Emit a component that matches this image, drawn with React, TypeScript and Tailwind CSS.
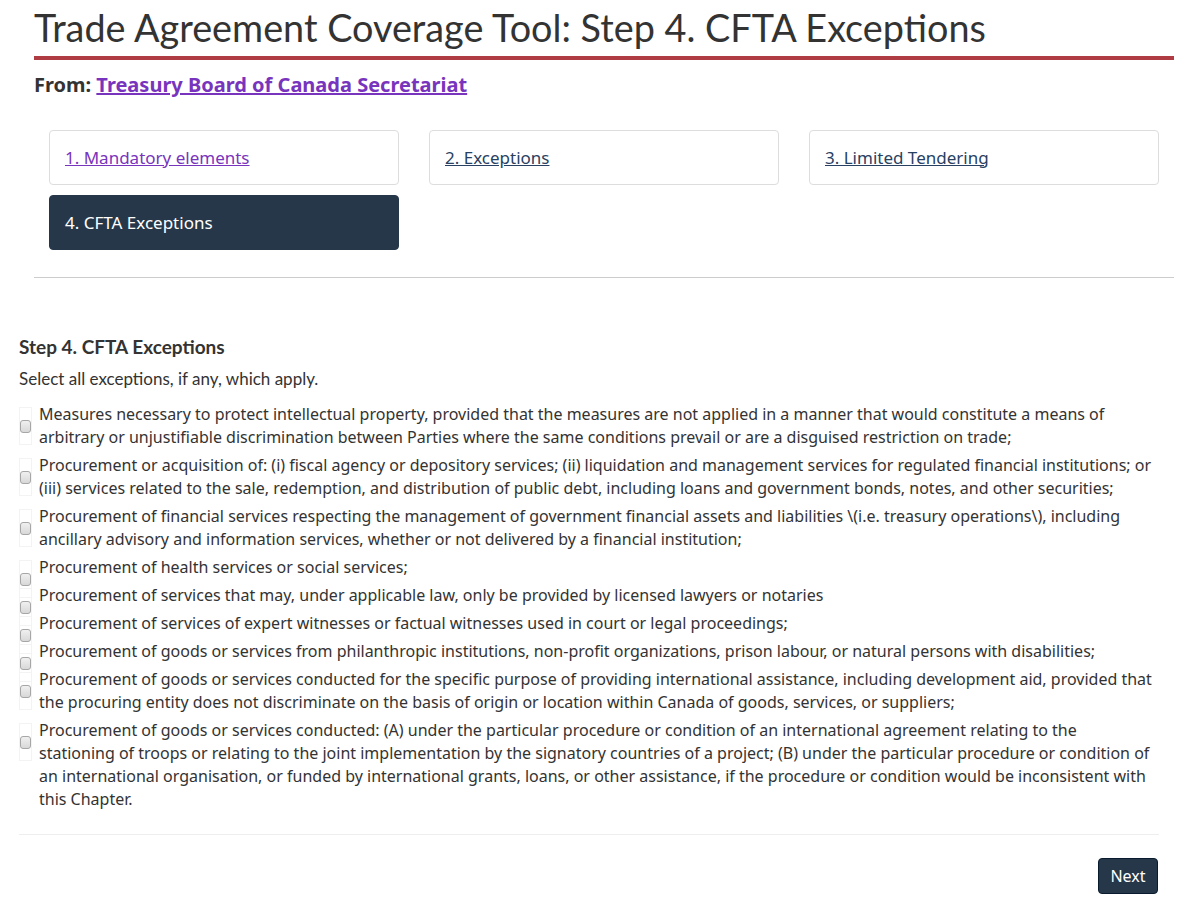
import React from "react";

const TABS = [
  { label: "1. Mandatory elements", color: "text-[#7834bc]" },
  { label: "2. Exceptions", color: "text-[#284162]" },
  { label: "3. Limited Tendering", color: "text-[#284162]" },
];

const EXCEPTIONS = [
  "Measures necessary to protect intellectual property, provided that the measures are not applied in a manner that would constitute a means of arbitrary or unjustifiable discrimination between Parties where the same conditions prevail or are a disguised restriction on trade;",
  "Procurement or acquisition of: (i) fiscal agency or depository services; (ii) liquidation and management services for regulated financial institutions; or (iii) services related to the sale, redemption, and distribution of public debt, including loans and government bonds, notes, and other securities;",
  "Procurement of financial services respecting the management of government financial assets and liabilities \\(i.e. treasury operations\\), including ancillary advisory and information services, whether or not delivered by a financial institution;",
  "Procurement of health services or social services;",
  "Procurement of services that may, under applicable law, only be provided by licensed lawyers or notaries",
  "Procurement of services of expert witnesses or factual witnesses used in court or legal proceedings;",
  "Procurement of goods or services from philanthropic institutions, non-profit organizations, prison labour, or natural persons with disabilities;",
  "Procurement of goods or services conducted for the specific purpose of providing international assistance, including development aid, provided that the procuring entity does not discriminate on the basis of origin or location within Canada of goods, services, or suppliers;",
  "Procurement of goods or services conducted: (A) under the particular procedure or condition of an international agreement relating to the stationing of troops or relating to the joint implementation by the signatory countries of a project; (B) under the particular procedure or condition of an international organisation, or funded by international grants, loans, or other assistance, if the procedure or condition would be inconsistent with this Chapter.",
];

const lato = "font-['Lato','Liberation_Sans',sans-serif]";
const noto = "font-['Noto_Sans','Liberation_Sans',sans-serif]";

export default function App() {
  return (
    <div className={`w-[1184px] bg-white text-[#333] ${noto}`}>
      {/* Header */}
      <div className="ml-[34px] w-[1140px] pt-[5px]">
        <h1 className={`${lato} text-[37.8px] leading-[46px] text-[#333] pb-[5px] border-b-4 border-[#af3c43]`}>
          Trade Agreement Coverage Tool: Step 4. CFTA Exceptions
        </h1>
        <p className="mt-[12px] text-[20px] leading-[26px] font-bold">
          From:{" "}
          <a href="#" className="text-[#7834bc] underline">
            Treasury Board of Canada Secretariat
          </a>
        </p>

        <div className="ml-[15px] mt-[32px] w-[1110px] grid grid-cols-3 gap-x-[30px] gap-y-[10px]">
          {TABS.map((t) => (
            <div key={t.label} className="h-[55px] flex items-center px-[15px] border border-[#ddd] rounded-[4px] bg-white">
              <a href="#" className={`${t.color} underline text-[17px]`}>
                {t.label}
              </a>
            </div>
          ))}
          <div className="h-[55px] flex items-center px-[15px] border border-[#26374a] rounded-[4px] bg-[#26374a]">
            <span className="text-white text-[17px]">4. CFTA Exceptions</span>
          </div>
        </div>

        <hr className="mt-[27px] border-t border-[#ccc]" />
      </div>

      {/* Step content */}
      <div className="ml-[19px] w-[1140px] pt-[57px]">
        <h2 className={`${lato} font-bold text-[19px] leading-[24px] text-[#333]`}>Step 4. CFTA Exceptions</h2>
        <p className={`${lato} mt-[10px] text-[17px] leading-[20px]`}>Select all exceptions, if any, which apply.</p>

        <div className="mt-[14px] flex flex-col gap-[5px]">
          {EXCEPTIONS.map((text, i) => (
            <label key={i} className="flex items-start">
              <span className="mt-[4px] h-[38px] -mb-[19px] w-[13px] shrink-0 flex items-center justify-center border border-[#f3f3f3]">
                <span className="block w-[13px] h-[13px] rounded-[3px] border border-[#a6a6a6] bg-gradient-to-b from-[#f0f0f0] to-[#d8d8d8]" />
              </span>
              <span className="ml-[7px] max-w-[1115px] text-[16px] leading-[23px] text-[#333]">{text}</span>
            </label>
          ))}
        </div>

        <hr className="mt-[23px] w-[1140px] border-t border-[#eee]" />

        <div className="flex justify-end pr-[1px] mt-[23px] pb-[3px]">
          <button className="h-[36px] px-[11.5px] rounded-[4px] bg-[#26374a] text-white text-[16px] border border-[#091c2d]">
            Next
          </button>
        </div>
      </div>
    </div>
  );
}
